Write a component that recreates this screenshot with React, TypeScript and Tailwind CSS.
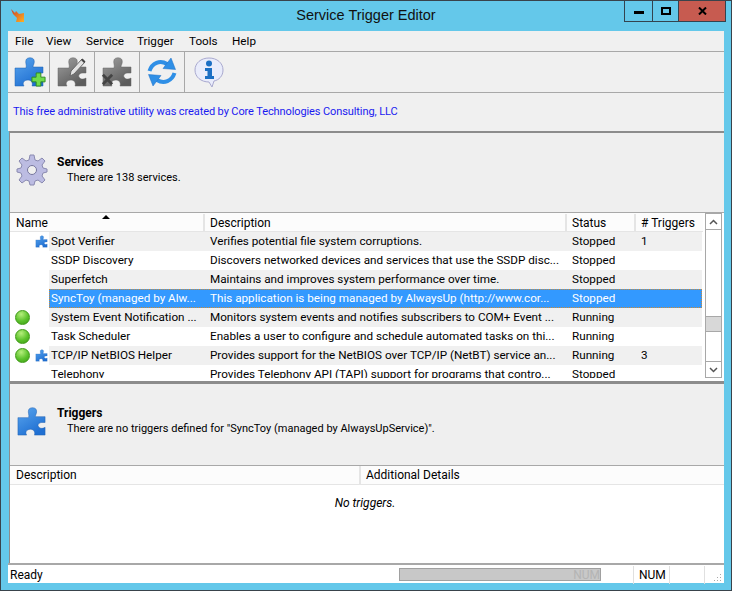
import { useId } from "react";
import type { ReactNode } from "react";

type Row = { name: string; desc: string; status: string; triggers?: string; running?: boolean; puzzle?: boolean };

const rows: Row[] = [
  { name: "Spot Verifier", desc: "Verifies potential file system corruptions.", status: "Stopped", triggers: "1", puzzle: true },
  { name: "SSDP Discovery", desc: "Discovers networked devices and services that use the SSDP disc...", status: "Stopped" },
  { name: "Superfetch", desc: "Maintains and improves system performance over time.", status: "Stopped" },
  { name: "SyncToy (managed by Alw...", desc: "This application is being managed by AlwaysUp (http://www.cor...", status: "Stopped" },
  { name: "System Event Notification ...", desc: "Monitors system events and notifies subscribers to COM+ Event ...", status: "Running", running: true },
  { name: "Task Scheduler", desc: "Enables a user to configure and schedule automated tasks on thi...", status: "Running", running: true },
  { name: "TCP/IP NetBIOS Helper", desc: "Provides support for the NetBIOS over TCP/IP (NetBT) service an...", status: "Running", triggers: "3", running: true, puzzle: true },
  { name: "Telephony", desc: "Provides Telephony API (TAPI) support for programs that contro...", status: "Stopped" },
];

const puzzle =
  "M2 12 H13 C14 9 12 7 13 4 C14 1 20 1 21 4 C22 7 20 9 20 11 H30 V17 H27 C24 17 22 19 23 21 C24 23 27 24 30 22 V30 H19 C20 28 19 24 15 24 C11 24 9 27 11 30 H2 Z";

function Puzzle({ grey = false, size = 32, className = "" }: { grey?: boolean; size?: number; className?: string }) {
  const id = useId();
  return (
    <svg width={size} height={size} viewBox="0 0 32 32" className={className}>
      <defs>
        <linearGradient id={id} x1="0" y1="0" x2="0.6" y2="1">
          <stop offset="0" stopColor={grey ? "#a0a0a0" : "#5aa6ee"} />
          <stop offset="1" stopColor={grey ? "#5c5c5c" : "#1f6fd2"} />
        </linearGradient>
      </defs>
      <path d={puzzle} fill={`url(#${id})`} stroke={grey ? "#66666680" : "#1c5fb080"} strokeWidth="1" />
    </svg>
  );
}

function ToolButton({ children, wide = 45 }: { children: ReactNode; wide?: number }) {
  return (
    <div className="flex h-[40px] items-center justify-center border-r border-[#a8a8a8]" style={{ width: wide }}>
      {children}
    </div>
  );
}

function Ball() {
  return <div className="h-[15px] w-[15px] rounded-full border border-[#3f9a18] bg-[radial-gradient(circle_at_40%_25%,#b5ee7c,#5cc22c_55%,#3b9c12)]" />;
}

function Cell({ width, children, className = "pl-[5px]" }: { width: number; children?: ReactNode; className?: string }) {
  return (
    <div className={`shrink-0 overflow-hidden whitespace-nowrap ${className}`} style={{ width }}>
      {children}
    </div>
  );
}

function Refresh() {
  const arrow = (
    <>
      <path d="M3.5 15 C6 7 14 3.5 21 8" fill="none" stroke="#2f8fe6" strokeWidth="4" />
      <path d="M25 2 L29.5 13.5 L17 12.5 Z" fill="#2f8fe6" stroke="#1c6fc4" strokeWidth="0.5" />
    </>
  );
  return (
    <svg width="32" height="32" viewBox="0 0 32 32">
      {arrow}
      <g transform="rotate(180 16 16)">{arrow}</g>
    </svg>
  );
}

export default function App() {
  return (
    <div className="flex h-[591px] w-[732px] flex-col overflow-hidden border border-[#39434b] bg-[#64c8ea] px-[7px] pb-[7px] font-['Roboto',sans-serif] text-[11px] text-black">
      {/* title bar */}
      <div className="relative flex h-[30px] shrink-0 items-center justify-center font-['Liberation_Sans',sans-serif] text-[14.5px]">
        <svg width="16" height="16" viewBox="0 0 16 16" className="absolute left-[2px] top-[7px]">
          <defs>
            <linearGradient id="bolt" x1="0" y1="0" x2="1" y2="1">
              <stop offset="0" stopColor="#c8402a" />
              <stop offset="1" stopColor="#ffb020" />
            </linearGradient>
          </defs>
          <path d="M1 1 L5 5 L6 3 L9 6 L14 5 L14 14 L6 14 L7 10 L3 6 Z" fill="url(#bolt)" />
        </svg>
        <span className="text-[#111]">Service Trigger Editor</span>
        <div className="absolute right-[-2px] top-[-1px] flex h-[22px] border border-t-0 border-[#33434f]">
          <div className="flex w-[28px] items-center justify-center border-r border-[#33434f]">
            <div className="mt-[3px] h-[3px] w-[10px] bg-black" />
          </div>
          <div className="flex w-[26px] items-center justify-center border-r border-[#33434f]">
            <div className="h-[8px] w-[10px] border-2 border-black" />
          </div>
          <div className="flex w-[46px] items-center justify-center bg-[#c75b50]">
            <svg width="9" height="8" viewBox="0 0 9 8">
              <path d="M1 0.5 L8 7.5 M8 0.5 L1 7.5" stroke="#000" strokeWidth="2" />
            </svg>
          </div>
        </div>
      </div>

      {/* menu */}
      <div className="flex h-[21px] shrink-0 items-center border-b border-[#a8a8a8] bg-[#f0f0f0] pl-[7px] pt-[1px] text-[11.7px]">
        <span className="w-[31px]">File</span>
        <span className="w-[40px]">View</span>
        <span className="w-[51px]">Service</span>
        <span className="w-[52px]">Trigger</span>
        <span className="w-[43px]">Tools</span>
        <span>Help</span>
      </div>

      {/* toolbar */}
      <div className="flex h-[41px] shrink-0 border-b border-[#a8a8a8] bg-[#f0f0f0]">
        <ToolButton wide={42}>
          <div className="relative h-[32px] w-[32px]">
            <Puzzle />
            <svg width="15" height="15" viewBox="0 0 16 16" className="absolute bottom-[1px] right-[-1px]">
              <path d="M5.5 1 H10.5 V5.5 H15 V10.5 H10.5 V15 H5.5 V10.5 H1 V5.5 H5.5 Z" fill="#6fdc4a" stroke="#2f8a1b" />
            </svg>
          </div>
        </ToolButton>
        <ToolButton>
          <div className="relative h-[32px] w-[32px]">
            <Puzzle grey />
            <svg width="20" height="22" viewBox="0 0 20 22" className="absolute right-[1px] top-0">
              <path d="M3 20 L4 15 L15 3 L18 6 L7 18 Z" fill="#e2e2e2" stroke="#666" />
              <path d="M14 4 L15.5 2.5 L18.5 5.5 L17 7 Z" fill="#444" />
            </svg>
          </div>
        </ToolButton>
        <ToolButton>
          <div className="relative h-[32px] w-[32px]">
            <Puzzle grey />
            <svg width="13" height="13" viewBox="0 0 14 14" className="absolute bottom-[2px] left-0">
              <path d="M2 2 L12 12 M12 2 L2 12" stroke="#444" strokeWidth="3" />
            </svg>
          </div>
        </ToolButton>
        <ToolButton>
          <Refresh />
        </ToolButton>
        <div className="flex w-[48px] items-center justify-center">
          <svg width="32" height="32" viewBox="0 0 32 32">
            <path d="M16 2 C24 2 30 7 30 14 C30 20 26 24 21 25 L19 31 L16 26 C8 26 2 21 2 14 C2 7 8 2 16 2 Z" fill="#e9ecfb" stroke="#a9a9cf" />
            <circle cx="16" cy="7.5" r="3" fill="#1c6fc4" />
            <path d="M12 12 H19 V20 H21 V23 H12 V20 H14.5 V15 H12 Z" fill="#1c6fc4" />
          </svg>
        </div>
      </div>

      {/* credit line */}
      <div className="flex h-[38px] shrink-0 items-center bg-[#f0f0f0] pl-[5px] tracking-[-0.1px] text-[#1a1af0]">
        This free administrative utility was created by Core Technologies Consulting, LLC
      </div>

      {/* services */}
      <div className="ml-[1px] flex min-h-0 flex-1 flex-col border-l border-t-2 border-[#8c8c8c] bg-[#efefef]">
        <div className="flex h-[79px] shrink-0 items-start pl-[6px] pt-[22px]">
          <svg width="32" height="32" viewBox="0 0 32 32" className="mt-[-1px]">
            <path
              d="M14 1 H18 L19 6 L22 7 L26 4 L29 7 L26 11 L27 14 L31 15 V18 L27 19 L26 22 L29 26 L26 29 L22 26 L19 27 L18 31 H14 L13 27 L10 26 L6 29 L3 26 L6 22 L5 19 L1 18 V15 L5 14 L6 11 L3 7 L6 4 L10 7 L13 6 Z"
              fill="#bcbce2"
              stroke="#8a8ab0"
            />
            <circle cx="16" cy="16" r="4.5" fill="#efefef" stroke="#76769e" />
          </svg>
          <div className="ml-[9px] leading-[15px]">
            <div className="text-[12px] font-bold">Services</div>
            <div className="pl-[10px]">There are 138 services.</div>
          </div>
        </div>

        {/* service list */}
        <div className="flex h-[169px] shrink-0 border-t border-[#a8a8a8] bg-white text-[11.7px]">
          <div className="h-[165px] min-w-0 flex-1 overflow-hidden">
            <div className="relative flex h-[19px] items-center border-b border-[#e5e5e5] bg-[#fcfcfc] pt-[1px] text-[12px]">
              <Cell width={195} className="border-r-2 border-[#e5e5e5] pl-[6px]">Name</Cell>
              <Cell width={362} className="border-r-2 border-[#e5e5e5] pl-[5px]">Description</Cell>
              <Cell width={69} className="border-r-2 border-[#e5e5e5] pl-[5px]">Status</Cell>
              <Cell width={67}># Triggers</Cell>
              <div className="absolute left-[92px] top-[2px] h-0 w-0 border-x-[4px] border-b-[4px] border-x-transparent border-b-black" />
            </div>
            {rows.map((r, i) => {
              const selected = i === 3;
              const shade = i % 2 === 0 && !selected ? "bg-[#f0f0f0]" : "";
              return (
                <div key={r.name} className="flex h-[19px] items-center">
                  <div className="flex h-full w-[39px] shrink-0 items-center bg-white pl-[5px]">
                    <div className="w-[20px]">{r.running && <Ball />}</div>
                    {r.puzzle && <Puzzle size={13} />}
                  </div>
                  <div
                    className={`flex h-full w-[653px] shrink-0 items-center pt-[1px] ${shade} ${
                      selected ? "bg-[#3399ff] text-white outline-1 -outline-offset-1 outline-dotted outline-[#c98a3a]" : ""
                    }`}
                  >
                    <Cell width={156} className="pl-[2px]">{r.name}</Cell>
                    <Cell width={362}>{r.desc}</Cell>
                    <Cell width={69}>{r.status}</Cell>
                    <Cell width={66}>{r.triggers}</Cell>
                  </div>
                </div>
              );
            })}
          </div>
          {/* scrollbar */}
          <div className="mx-[2px] flex h-[165px] w-[17px] shrink-0 flex-col border border-[#a8a8a8] bg-white">
            <div className="flex h-[16px] items-center justify-center border-b border-[#a8a8a8]">
              <svg width="9" height="6" viewBox="0 0 9 6"><path d="M1 5 L4.5 1.5 L8 5" fill="none" stroke="#555" strokeWidth="1.5" /></svg>
            </div>
            <div className="flex-1 pt-[86px]">
              <div className="h-[16px] border-y border-[#a8a8a8] bg-[#d8d8d8]" />
            </div>
            <div className="flex h-[16px] items-center justify-center border-t border-[#a8a8a8]">
              <svg width="9" height="6" viewBox="0 0 9 6"><path d="M1 1 L4.5 4.5 L8 1" fill="none" stroke="#555" strokeWidth="1.5" /></svg>
            </div>
          </div>
        </div>

        {/* triggers */}
        <div className="flex h-[84px] shrink-0 items-start border-t-[3px] border-[#8c8c8c] pl-[6px] pt-[22px]">
          <Puzzle size={31} />
          <div className="ml-[10px] leading-[15px]">
            <div className="text-[12px] font-bold">Triggers</div>
            <div className="pl-[10px]">There are no triggers defined for "SyncToy (managed by AlwaysUpService)".</div>
          </div>
        </div>

        <div className="flex flex-1 flex-col border-t border-[#a8a8a8] bg-white text-[12px]">
          <div className="flex h-[19px] shrink-0 items-center border-b border-[#e5e5e5] bg-[#fcfcfc]">
            <Cell width={351} className="border-r-2 border-[#e5e5e5] pl-[6px]">Description</Cell>
            <Cell width={300}>Additional Details</Cell>
          </div>
          <div className="pr-[4px] pt-[9px] text-center italic">No triggers.</div>
        </div>
      </div>

      {/* status bar */}
      <div className="flex h-[20px] shrink-0 items-center border-t-2 border-[#a8a8a8] bg-white pl-[2px] pt-[1px] text-[12px]">
        <span className="flex-1">Ready</span>
        <div className="mr-[3px] flex h-[13px] w-[202px] items-center justify-end border border-[#a0a0a0] bg-[#c8c8c8] text-[#b4b4b4]">NUM</div>
        <div className="w-[30px] border-r border-[#e0e0e0]">&nbsp;</div>
        <div className="w-[36px] border-r border-[#e0e0e0] pl-[5px]">NUM</div>
        <div className="w-[35px] border-r border-[#e0e0e0]">&nbsp;</div>
        <div className="flex h-[14px] w-[19px] items-end justify-end pr-[2px]">
          <svg width="9" height="9" viewBox="0 0 9 9">
            <path d="M7 1h1v1h-1zM4 4h1v1h-1zM7 4h1v1h-1zM1 7h1v1h-1zM4 7h1v1h-1zM7 7h1v1h-1z" fill="#a8a8a8" />
          </svg>
        </div>
      </div>
    </div>
  );
}
